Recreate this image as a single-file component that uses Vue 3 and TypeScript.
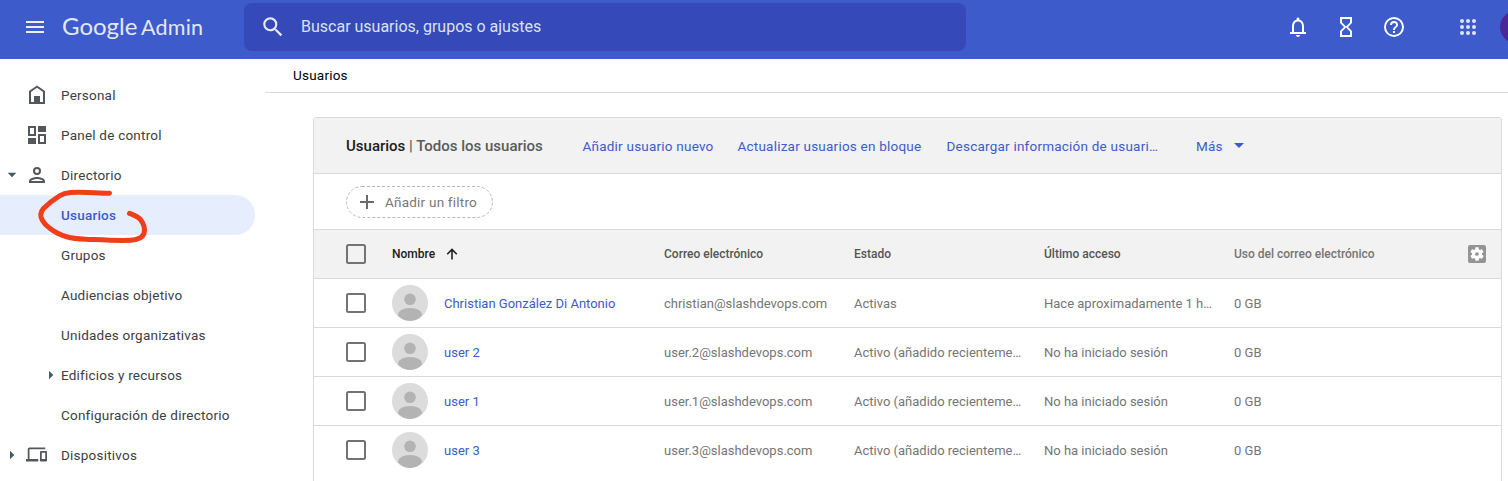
<script setup lang="ts">
interface NavItem {
  label: string
  icon?: 'home' | 'dashboard' | 'person' | 'devices'
  arrow?: 'down' | 'right'
  nested?: boolean
  active?: boolean
}

interface UserRow {
  name: string
  email: string
  status: string
  lastAccess: string
  usage: string
}

const navItems: NavItem[] = [
  { label: 'Personal', icon: 'home' },
  { label: 'Panel de control', icon: 'dashboard' },
  { label: 'Directorio', icon: 'person', arrow: 'down' },
  { label: 'Usuarios', active: true },
  { label: 'Grupos' },
  { label: 'Audiencias objetivo' },
  { label: 'Unidades organizativas' },
  { label: 'Edificios y recursos', arrow: 'right', nested: true },
  { label: 'Configuración de directorio' },
  { label: 'Dispositivos', icon: 'devices', arrow: 'right' },
]

const iconPaths: Record<string, string> = {
  home: 'M12 2.500 4 8v13h16V8zM6 19V9l6-4.200L18 9v10h-3v-6H9v6z',
  dashboard: 'M3 3h8v10H3zM5 5v6h4V5zM13 3h8v6h-8zM13 11h8v10h-8zM15 13v6h4v-6zM3 15h8v6H3z',
  person:
    'M12 6a2 2 0 1 1 0 4 2 2 0 0 1 0-4m0 10c2.700 0 5.800 1.290 6 2H6c.23-.72 3.310-2 6-2m0-12a4 4 0 1 0 0 8 4 4 0 0 0 0-8zm0 10c-2.670 0-8 1.340-8 4v2h16v-2c0-2.660-5.330-4-8-4z',
  devices:
    'M4 6h18V4H4c-1.100 0-2 .9-2 2v11H0v3h14v-3H4V6zm19 2h-6c-.55 0-1 .45-1 1v10c0 .55.45 1 1 1h6c.55 0 1-.45 1-1V9c0-.55-.45-1-1-1zm-1 9h-4v-7h4v7z',
}

const users: UserRow[] = [
  {
    name: 'Christian González Di Antonio',
    email: 'christian@slashdevops.com',
    status: 'Activas',
    lastAccess: 'Hace aproximadamente 1 h…',
    usage: '0 GB',
  },
  ...[2, 1, 3].map((n) => ({
    name: `user ${n}`,
    email: `user.${n}@slashdevops.com`,
    status: 'Activo (añadido recienteme…',
    lastAccess: 'No ha iniciado sesión',
    usage: '0 GB',
  })),
]

const dots = [0, 1, 2, 3, 4, 5, 6, 7, 8]
</script>

<template>
  <div class="app">
    <header class="topbar">
      <svg class="menu" viewBox="0 0 24 24"><path d="M3 6h18v2H3zM3 11h18v2H3zM3 16h18v2H3z" /></svg>
      <div class="logo"><span class="logo-google">Google</span><span class="logo-admin">Admin</span></div>
      <div class="search">
        <svg class="search-icon" viewBox="0 0 24 24">
          <path d="M15.500 14h-.79l-.28-.27A6.470 6.470 0 0 0 16 9.500 6.500 6.500 0 1 0 9.500 16c1.610 0 3.090-.59 4.230-1.570l.27.28v.79l5 4.990L20.490 19l-4.990-5zm-6 0C7.010 14 5 11.990 5 9.500S7.010 5 9.500 5 14 7.010 14 9.500 11.990 14 9.500 14z" />
        </svg>
        <span>Buscar usuarios, grupos o ajustes</span>
      </div>
      <div class="actions">
        <svg viewBox="0 0 24 24">
          <path d="M18 17v-6c0-3.070-1.630-5.640-4.500-6.320V4a1.500 1.500 0 0 0-3 0v.68C7.640 5.360 6 7.920 6 11v6H4v2h16v-2zm-2 0H8v-6c0-2.480 1.510-4.500 4-4.500s4 2.020 4 4.500zM12 22c1.100 0 2-.9 2-2h-4c0 1.100.9 2 2 2z" />
        </svg>
        <svg viewBox="0 0 24 24">
          <path d="M6 2v6l4 4-4 4v6h12v-6l-4-4 4-4V2zm10 14.500V20H8v-3.500l4-4zm-4-5-4-4V4h8v3.500z" />
        </svg>
        <svg viewBox="0 0 24 24">
          <path d="M11 18h2v-2h-2zm1-16a10 10 0 1 0 0 20 10 10 0 0 0 0-20zm0 18c-4.410 0-8-3.590-8-8s3.590-8 8-8 8 3.590 8 8-3.590 8-8 8zm0-14a4 4 0 0 0-4 4h2c0-1.100.9-2 2-2s2 .9 2 2c0 2-3 1.750-3 5h2c0-2.250 3-2.500 3-5a4 4 0 0 0-4-4z" />
        </svg>
        <svg class="apps" viewBox="0 0 24 24">
          <circle v-for="i in dots" :key="i" :cx="6 + (i % 3) * 6" :cy="6 + Math.floor(i / 3) * 6" r="2" />
        </svg>
        <div class="account"></div>
      </div>
    </header>

    <div class="body">
      <nav class="sidebar">
        <div
          v-for="item in navItems"
          :key="item.label"
          class="nav-item"
          :class="{ active: item.active, nested: item.nested }"
        >
          <span class="nav-arrow">
            <svg v-if="item.arrow === 'down'" viewBox="0 0 10 10"><path d="M.7 2.800h8.600L5 7.300z" /></svg>
            <svg v-else-if="item.arrow === 'right'" viewBox="0 0 10 10"><path d="M3 .7v8.600L7.300 5z" /></svg>
          </span>
          <span class="nav-icon">
            <svg v-if="item.icon" viewBox="0 0 24 24" :class="item.icon">
              <path fill-rule="evenodd" :d="iconPaths[item.icon]" />
            </svg>
          </span>
          <span class="nav-label">{{ item.label }}</span>
          <svg v-if="item.active" class="scribble" viewBox="0 0 120 60">
            <path d="M75.500 8.200C62 8.100 48 6.500 36.500 7.500 31.500 8 28.500 9 25.500 10.800 19.500 14.500 13.500 19.500 9.500 23.500 6 27.500 6.500 32 8.500 35.500 10.500 39 12.500 41 15.500 43 20.500 47 26.500 50 33.500 52 40.500 54 48.500 54 56.500 54.500 70.500 55.100 85.500 55.800 96.500 55.300 104.500 54.800 108.500 52.500 110 48.500 111.500 43.500 109.500 38.500 106.500 34.500 103.500 31 100 30 95.500 28.300" />
          </svg>
        </div>
      </nav>

      <main class="main">
        <div class="crumb">Usuarios</div>
        <section class="card">
          <div class="toolbar">
            <h1><b>Usuarios</b> | Todos los usuarios</h1>
            <a>Añadir usuario nuevo</a>
            <a>Actualizar usuarios en bloque</a>
            <a>Descargar información de usuari…</a>
            <a class="more">Más<svg viewBox="0 0 10 5"><path d="M0 0h10L5 5z" /></svg></a>
          </div>
          <div class="filters">
            <div class="chip">
              <svg class="chip-outline" viewBox="0 0 147 32"><rect x=".5" y=".5" width="146" height="31" rx="15.500" /></svg>
              <svg class="plus" viewBox="0 0 14 14"><path d="M6 0h2v6h6v2H8v6H6V8H0V6h6z" /></svg>
              <span>Añadir un filtro</span>
            </div>
          </div>
          <div class="row head">
            <span class="check"></span>
            <span class="name-head">Nombre
              <svg viewBox="0 0 12 12"><path d="M6 11.500V1.500M1.200 6.200 6 1.400l4.800 4.800" /></svg>
            </span>
            <span>Correo electrónico</span>
            <span>Estado</span>
            <span>Último acceso</span>
            <span class="soft">Uso del correo electrónico</span>
            <span class="gear">
              <svg viewBox="0 0 24 24">
                <path d="M19.430 12.980c.04-.32.07-.64.07-.98s-.03-.66-.07-.98l2.110-1.650c.19-.15.24-.42.12-.64l-2-3.460c-.12-.22-.39-.3-.61-.22l-2.490 1c-.52-.4-1.080-.73-1.690-.98l-.38-2.650A.49.49 0 0 0 14 2h-4c-.25 0-.46.18-.49.42l-.38 2.650c-.61.25-1.170.59-1.690.98l-2.490-1c-.23-.09-.49 0-.61.22l-2 3.460c-.13.22-.07.49.12.64l2.110 1.650c-.04.32-.07.65-.07.98s.03.66.07.98l-2.110 1.650c-.19.15-.24.42-.12.64l2 3.460c.12.22.39.3.61.22l2.490-1c.52.4 1.080.73 1.690.98l.38 2.650c.03.24.24.42.49.42h4c.25 0 .46-.18.49-.42l.38-2.650c.61-.25 1.170-.59 1.690-.98l2.490 1c.23.09.49 0 .61-.22l2-3.460c.12-.22.07-.49-.12-.64zM12 14.800a2.800 2.800 0 1 1 0-5.600 2.800 2.800 0 0 1 0 5.600z" />
              </svg>
            </span>
          </div>
          <div v-for="user in users" :key="user.name" class="row">
            <span class="check"></span>
            <svg class="avatar" viewBox="0 0 36 36">
              <circle cx="18" cy="18" r="18" fill="#dcdcdc" />
              <circle cx="18" cy="14.300" r="5.800" />
              <path d="M6 30.500C5.600 26 11 23 18 23s12.400 3 12 7.500A18 18 0 0 1 18 36 18 18 0 0 1 6 30.500z" />
            </svg>
            <a>{{ user.name }}</a>
            <span>{{ user.email }}</span>
            <span>{{ user.status }}</span>
            <span>{{ user.lastAccess }}</span>
            <span>{{ user.usage }}</span>
          </div>
        </section>
      </main>
    </div>
  </div>
</template>

<style>
body {
  margin: 0;
  overflow: hidden;
}
</style>

<style scoped>
.app {
  height: 481px;
  overflow: hidden;
  background: #fff;
  font-family: Roboto, "Liberation Sans", sans-serif;
  color: #3c4043;
}
svg {
  display: block;
  flex: none;
}
.topbar {
  display: flex;
  align-items: center;
  box-sizing: border-box;
  height: 59px;
  padding-bottom: 5px;
  background: #3d5bca;
  overflow: hidden;
}
.menu {
  width: 24px;
  height: 24px;
  margin-left: 23px;
  fill: #eceffa;
}
.logo {
  display: flex;
  flex: none;
  align-items: baseline;
  width: 182px;
  margin-left: 15px;
  padding-bottom: 2px;
  color: #e4e8f7;
  font-family: Lato, sans-serif;
  line-height: 30px;
}
.logo-google {
  width: 79px;
  font-size: 24px;
}
.logo-admin {
  font-size: 21.5px;
  letter-spacing: 0.2px;
}
.search {
  display: flex;
  flex: none;
  align-items: center;
  box-sizing: border-box;
  width: 722px;
  height: 48px;
  padding-left: 16px;
  border-radius: 8px;
  background: #354ab8;
  color: #dde1f3;
  font-size: 16px;
}
.search span {
  padding-bottom: 1px;
}
.search-icon {
  width: 26px;
  height: 26px;
  margin-right: 15px;
  fill: #e6e9f7;
}
.actions {
  display: flex;
  flex: none;
  align-items: center;
  margin-left: 320px;
}
.actions svg {
  width: 24px;
  height: 24px;
  margin-right: 24px;
  fill: #fff;
}
.actions .apps {
  margin-left: 26px;
  margin-right: 20px;
  fill: #dfe4f6;
}
.account {
  flex: none;
  width: 32px;
  height: 32px;
  border-radius: 50%;
  background: #4a2897;
}
.body {
  display: flex;
}
.sidebar {
  flex: none;
  width: 265px;
  padding-top: 16px;
}
.nav-item,
.crumb,
.toolbar a,
.chip {
  font-size: 13.5px;
  letter-spacing: 0.22px;
}
.nav-item {
  position: relative;
  display: flex;
  align-items: center;
  width: 255px;
  height: 40px;
}
.nav-item.active {
  border-radius: 0 20px 20px 0;
  background: #e6edfd;
  color: #3d5bca;
  font-weight: 500;
}
.nav-arrow {
  width: 25px;
}
.nav-arrow svg {
  width: 10px;
  height: 10px;
  margin-left: 7px;
  fill: #455a64;
}
.nested .nav-arrow {
  width: 61px;
}
.nested .nav-arrow svg {
  margin-left: 46px;
}
.nav-icon {
  width: 36px;
}
.nested .nav-icon {
  display: none;
}
.nav-icon svg {
  width: 24px;
  height: 24px;
  margin-top: -1px;
  fill: #54585d;
}
.nav-icon .devices {
  width: 21px;
  height: 21px;
  margin-left: 1px;
}
.scribble {
  position: absolute;
  left: 34px;
  top: -10px;
  width: 120px;
  height: 60px;
  fill: none;
  stroke: #ee3e1a;
  stroke-width: 5;
  stroke-linecap: round;
  stroke-linejoin: round;
  z-index: 2;
}
.main {
  flex: 1;
}
.crumb {
  box-sizing: border-box;
  height: 34px;
  padding-left: 28px;
  border-bottom: 1px solid #dadada;
  color: #000;
  line-height: 33px;
}
.card {
  box-sizing: border-box;
  width: 1189px;
  height: 400px;
  margin: 24px 0 0 48px;
  border: 1px solid #dadada;
  border-radius: 3px;
  overflow: hidden;
}
.toolbar {
  display: grid;
  grid-template-columns: 236.5px 155px 209px 249.5px auto;
  align-items: center;
  height: 55px;
  padding-left: 32px;
  border-bottom: 1px solid #dadada;
  background: #f2f2f2;
  line-height: 20px;
}
.toolbar a {
  padding-top: 1px;
}
h1 {
  margin: 0;
  color: #5a5a5a;
  font-size: 15px;
  font-weight: 500;
  white-space: nowrap;
}
h1 b {
  color: #202020;
  font-weight: 500;
}
a {
  color: #3d5bca;
  white-space: nowrap;
}
.more {
  display: flex;
  align-items: center;
}
.more svg {
  width: 10px;
  height: 5px;
  margin: -1px 0 0 11px;
  fill: #3d5bca;
}
.filters {
  display: flex;
  align-items: center;
  height: 55px;
  padding-left: 32px;
  border-bottom: 1px solid #dadada;
}
.chip {
  position: relative;
  display: flex;
  align-items: center;
  width: 147px;
  height: 32px;
  color: #777;
}
.chip span {
  padding-top: 1px;
}
.chip-outline {
  position: absolute;
  inset: 0;
  width: 147px;
  height: 32px;
  fill: none;
  stroke: #b8b8b8;
  stroke-dasharray: 3 2;
}
.plus {
  width: 14px;
  height: 14px;
  margin: 0 11px 0 14px;
  fill: #6a6a6a;
}
.row {
  display: grid;
  grid-template-columns: 46px 52px 220px 190px 190px 190px 234px 18px;
  align-items: center;
  height: 48px;
  padding-left: 32px;
  border-bottom: 1px solid #dadada;
  color: #757575;
  font-size: 13px;
}
.row > a,
.row > span {
  white-space: nowrap;
}
.row:last-child {
  border-bottom: 0;
}
.head {
  background: #f2f2f2;
  color: #555;
  font-size: 12px;
  font-weight: 500;
}
.head .name-head {
  grid-column: span 2;
  display: flex;
  align-items: center;
  color: #1c1c1c;
}
.name-head svg {
  width: 12px;
  height: 12px;
  margin-left: 11px;
  fill: none;
  stroke: #222;
  stroke-width: 1.6;
}
.head .soft {
  color: #757575;
}
.check {
  box-sizing: border-box;
  width: 20px;
  height: 20px;
  border: 2px solid #737373;
  border-radius: 2.5px;
}
.avatar {
  width: 36px;
  height: 36px;
  fill: #b3b3b3;
}
.gear {
  width: 18px;
  height: 18px;
  border-radius: 2px;
  background: #949494;
}
.gear svg {
  width: 16px;
  height: 16px;
  margin: 1px;
  fill: #fff;
}
</style>
